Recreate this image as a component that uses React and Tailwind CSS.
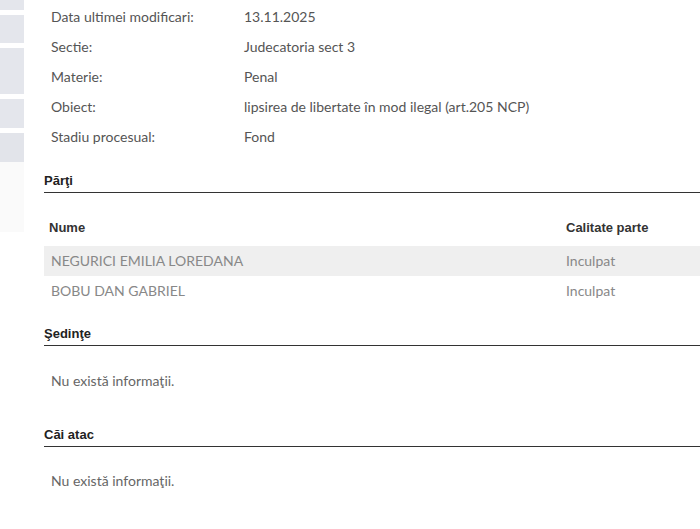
const details = [
  ['Data ultimei modificari:', '13.11.2025'],
  ['Sectie:', 'Judecatoria sect 3'],
  ['Materie:', 'Penal'],
  ['Obiect:', 'lipsirea de libertate în mod ilegal (art.205 NCP)'],
  ['Stadiu procesual:', 'Fond'],
]

const parti = [
  ['NEGURICI EMILIA LOREDANA', 'Inculpat'],
  ['BOBU DAN GABRIEL', 'Inculpat'],
]

const headFont = { fontFamily: '"Liberation Sans", Arial, sans-serif' }

function SectionTitle({ children, className = '' }) {
  return (
    <div className={`border-b border-[#333] pb-[3px] ${className}`}>
      <h3 className="text-[13px] leading-[16px] font-bold text-[#222]" style={headFont}>{children}</h3>
    </div>
  )
}

function Empty() {
  return <p className="pl-[7px] text-[14px] leading-[30px] text-[#666]">Nu există informaţii.</p>
}

export default function App() {
  return (
    <div
      className="w-[700px] h-[529px] overflow-hidden bg-white flex"
      style={{ fontFamily: 'Lato, "Liberation Sans", sans-serif' }}
    >
      {/* Left rail */}
      <div className="w-[24px] shrink-0 flex flex-col">
        <div className="h-[10px] bg-[#e4e6ec]" />
        <div className="h-[28px] mt-[5px] bg-[#e4e6ec]" />
        <div className="h-[46px] mt-[5px] bg-[#e4e6ec]" />
        <div className="h-[29px] mt-[5px] bg-[#e4e6ec]" />
        <div className="h-[29px] mt-[5px] bg-[#e2e4ea]" />
        <div className="h-[70px] bg-[#fafafa]" />
      </div>

      {/* Main */}
      <div className="flex-1 ml-[20px] pt-[2px]">
        <div className="flex flex-col">
          {details.map(([label, value]) => (
            <div key={label} className="flex text-[14px] leading-[30px] text-[#555]">
              <span className="w-[200px] pl-[7px] shrink-0">{label}</span>
              <span>{value}</span>
            </div>
          ))}
        </div>

        <SectionTitle className="mt-[21px]">Părţi</SectionTitle>

        <div className="mt-[20px]">
          <div className="flex text-[13px] leading-[30px] font-bold text-[#333] mb-[3px]" style={headFont}>
            <span className="w-[522px] pl-[5px] shrink-0">Nume</span>
            <span>Calitate parte</span>
          </div>
          {parti.map(([name, role], i) => (
            <div
              key={name}
              className={`flex text-[14px] leading-[30px] text-[#888] ${i === 0 ? 'bg-[#efefef]' : ''}`}
            >
              <span className="w-[522px] pl-[7px] shrink-0">{name}</span>
              <span>{role}</span>
            </div>
          ))}
        </div>

        <SectionTitle className="mt-[20px]">Şedinţe</SectionTitle>
        <div className="mt-[20px]">
          <Empty />
        </div>

        <SectionTitle className="mt-[31px]">Căi atac</SectionTitle>
        <div className="mt-[19px]">
          <Empty />
        </div>
      </div>
    </div>
  )
}
